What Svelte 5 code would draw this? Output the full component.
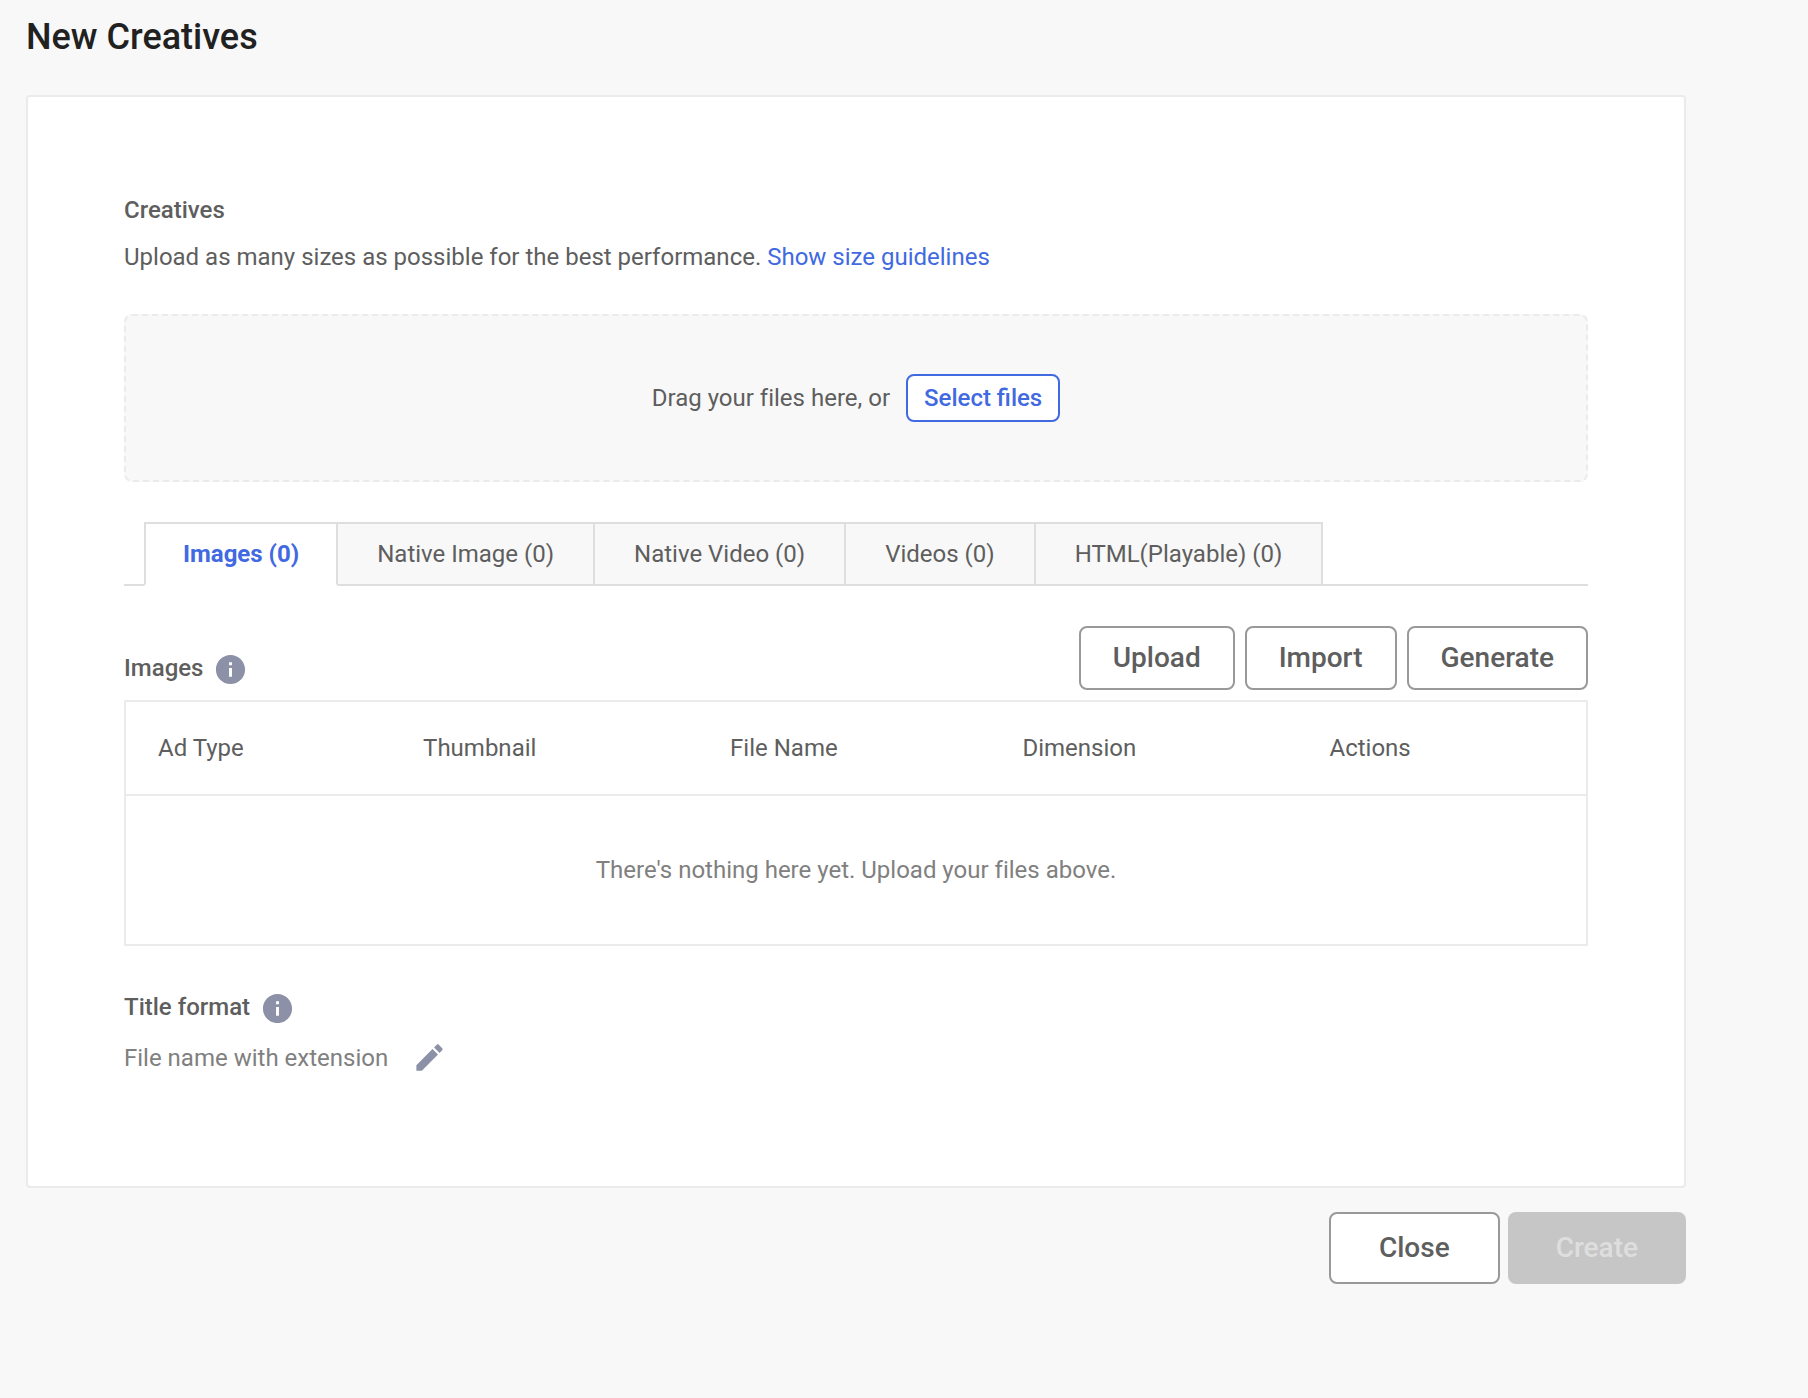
<script>
    const infoPath = "M12 2C6.48 2 2 6.48 2 12s4.48 10 10 10 10-4.48 10-10S17.52 2 12 2zm1 15h-2v-6h2v6zm0-8h-2V7h2v2z";
    const pencilPath = "M3 17.25V21h3.75L17.81 9.94l-3.75-3.75L3 17.25zM20.71 7.04c.39-.39.39-1.02 0-1.41l-2.34-2.34c-.39-.39-1.02-.39-1.41 0l-1.83 1.83 3.75 3.75 1.83-1.83z";

    let tabs = ["Images", "Native Image", "Native Video", "Videos", "HTML(Playable)"];
    let columns = ["Ad Type", "Thumbnail", "File Name", "Dimension", "Actions"];
    let files = [[], [], [], [], []];
    let active = 0;
</script>

<main>
    <h1>New Creatives</h1>

    <div class="card">
        <h2>Creatives</h2>
        <p class="hint">
            Upload as many sizes as possible for the best performance.
            <a href="#guidelines">Show size guidelines</a>
        </p>

        <div class="dropzone">
            <span>Drag your files here, or</span>
            <button class="select">Select files</button>
        </div>

        <div class="tabs" role="tablist">
            {#each tabs as tab, i}
                <button
                    class="tab"
                    class:active={active === i}
                    role="tab"
                    aria-selected={active === i}
                    on:click={() => active = i}
                >{tab} ({files[i].length})</button>
            {/each}
        </div>

        <div class="toolbar">
            <h2>
                {tabs[active]}
                <svg class="icon" viewBox="0 0 24 24" aria-hidden="true"><path d={infoPath} /></svg>
            </h2>
            <div class="actions">
                <button class="outline">Upload</button>
                <button class="outline">Import</button>
                <button class="outline">Generate</button>
            </div>
        </div>

        <table>
            <colgroup>
                <col class="type" />
                <col class="thumb" />
                <col class="name" />
                <col class="size" />
                <col />
            </colgroup>
            <thead>
                <tr>
                    {#each columns as column}
                        <th>{column}</th>
                    {/each}
                </tr>
            </thead>
            <tbody>
                <tr>
                    <td class="empty" colspan="5">There's nothing here yet. Upload your files above.</td>
                </tr>
            </tbody>
        </table>

        <h2 class="format">
            Title format
            <svg class="icon" viewBox="0 0 24 24" aria-hidden="true"><path d={infoPath} /></svg>
        </h2>
        <div class="format-value">
            <span>File name with extension</span>
            <button class="edit" aria-label="Edit title format">
                <svg class="icon" viewBox="0 0 24 24" aria-hidden="true"><path d={pencilPath} /></svg>
            </button>
        </div>
    </div>

    <div class="footer">
        <button class="outline large">Close</button>
        <button class="large create" disabled>Create</button>
    </div>
</main>

<style>
:global(body) {
    background-color: #f8f8f8;
    color: #5e5e5e;
    font-family: Roboto, "Liberation Sans", sans-serif;
    font-size: 24px;
    font-variant-ligatures: none;
    line-height: 32px;
}

main {
    padding: 17px 122px 112px 26px;
}

h1 {
    margin: 0 0 38px;
    color: #212121;
    font-size: 36px;
    font-weight: 500;
    line-height: 40px;
}

h2 {
    display: flex;
    align-items: flex-start;
    gap: 10px;
    margin: 0;
    font-size: 24px;
    font-weight: 500;
}

button {
    box-sizing: border-box;
    margin: 0;
    cursor: pointer;
    font-family: inherit;
    font-size: inherit;
    line-height: inherit;
}

.card {
    padding: 97px 96px 111px;
    border: 2px solid #ebebeb;
    border-radius: 4px;
    background-color: #fff;
}

.hint {
    margin: 15px 0 41px;
}

a {
    color: #4169e1;
    text-decoration: none;
}

.dropzone {
    display: flex;
    align-items: center;
    justify-content: center;
    gap: 16px;
    padding: 58px 0;
    border: 2px dashed #ebebeb;
    border-radius: 8px;
    background-color: #f8f8f8;
}

.select {
    height: 48px;
    padding: 0 16px;
    border: 2px solid #4169e1;
    border-radius: 8px;
    background-color: #fff;
    color: #4169e1;
    font-variant-ligatures: normal;
    font-weight: 500;
}

.tabs {
    display: flex;
    margin-top: 40px;
    padding-left: 20px;
    box-shadow: inset 0 -2px #dedede;
}

.tab {
    height: 64px;
    padding: 0 39px;
    border: 2px solid #dedede;
    border-left: none;
    background-color: #f8f8f8;
    color: #5e5e5e;
}

.tab:first-child {
    padding: 0 37px;
    border-left: 2px solid #dedede;
}

.tab.active {
    border-bottom-color: #fff;
    background-color: #fff;
    color: #4169e1;
    font-weight: 700;
}

.toolbar {
    display: flex;
    align-items: flex-end;
    justify-content: space-between;
    margin: 40px 0 10px;
}

.toolbar h2 {
    padding-bottom: 3px;
}

.icon {
    display: block;
    width: 35px;
    height: 35px;
    fill: #8c91a7;
}

.actions {
    display: flex;
    gap: 10px;
}

.outline {
    height: 64px;
    padding: 0 32px;
    border: 2px solid #999;
    border-radius: 8px;
    background-color: #fff;
    color: #5e5e5e;
    font-size: 28px;
    font-weight: 500;
}

table {
    width: 100%;
    border: 2px solid #ebebeb;
    border-collapse: collapse;
    table-layout: fixed;
}

.type {
    width: 18.2%;
}

.thumb, .size {
    width: 21%;
}

.name {
    width: 20%;
}

th {
    height: 92px;
    padding: 0 32px;
    border-bottom: 2px solid #ebebeb;
    font-weight: 400;
    text-align: left;
}

.empty {
    height: 148px;
    padding: 0;
    color: #808080;
    text-align: center;
}

.format {
    margin-top: 45px;
}

.format-value {
    display: flex;
    align-items: center;
    gap: 24px;
    margin-top: 14px;
    color: #808080;
}

.edit {
    padding: 0;
    border: none;
    background: none;
}

.footer {
    display: flex;
    justify-content: flex-end;
    gap: 8px;
    margin-top: 24px;
}

.large {
    height: 72px;
    padding: 0 48px;
    font-size: 28px;
    font-weight: 500;
}

.create {
    border: none;
    border-radius: 8px;
    background-color: #c6c6c6;
    color: #dedede;
}
</style>
